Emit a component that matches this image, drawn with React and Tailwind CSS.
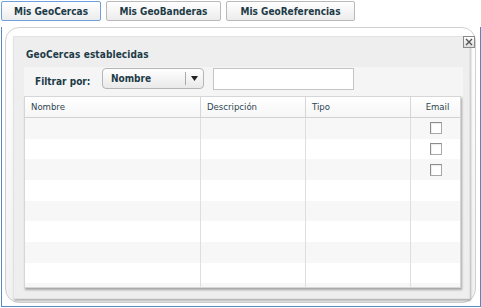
import React from 'react';

const tabs = [
  { label: 'Mis GeoCercas', w: 'w-[100px]', active: true },
  { label: 'Mis GeoBanderas', w: 'w-[115px]' },
  { label: 'Mis GeoReferencias', w: 'w-[129px]' },
];

const columns = [
  { label: 'Nombre', w: 'w-[176px]' },
  { label: 'Descripción', w: 'w-[105px]' },
  { label: 'Tipo', w: 'w-[105px]' },
  { label: 'Email', w: 'flex-1', center: true },
];

const rows = Array.from({ length: 9 }, (_, i) => ({ id: i, check: i < 3 }));

const Checkbox = () => (
  <span className="block w-[12px] h-[12px] bg-white border border-[#a8a8a8] border-t-[#8c8c8c] border-l-[#8c8c8c] shadow-[inset_1px_1px_1px_rgba(0,0,0,0.08)]" />
);

const App = () => {
  return (
    <div
      className="w-[481px] h-[308px] bg-white flex flex-col text-[#1d3b47]"
      style={{ fontFamily: '"DejaVu Sans Condensed", "DejaVu Sans", Verdana, sans-serif' }}
    >
      {/* Tabs */}
      <div className="flex gap-[5px] pl-[1px] pt-[1px] h-[27px]">
        {tabs.map((t) => (
          <button
            key={t.label}
            className={`${t.w} h-[20px] flex items-center justify-center text-[10px] font-bold rounded-[2px] bg-gradient-to-b from-white to-[#ececec] ${
              t.active ? 'border border-[#6f9fdc]' : 'border border-[#b9b9b9]'
            }`}
          >
            {t.label}
          </button>
        ))}
      </div>

      {/* Frame */}
      <div className="flex-1 ml-[1px] border-x border-b border-[#5b87c0] border-t-0 pl-[3px] pr-[4px] pb-[3px] mb-[1px] flex">
        <div className="relative flex-1 rounded-[14px] border border-[#d0d0d0] bg-gradient-to-b from-white to-[#f1f1f1] pl-[7px] pr-[5px] pt-[8px] pb-[3px] flex">
          {/* close */}
          <div className="absolute right-[0px] top-[8px] w-[12px] h-[12px] border border-[#8a8a8a] bg-gradient-to-b from-white to-[#dcdcdc] flex items-center justify-center">
            <svg width="8" height="8" viewBox="0 0 8 8">
              <path d="M1 1 L7 7 M7 1 L1 7" stroke="#555" strokeWidth="1.4" />
            </svg>
          </div>

          {/* Inner panel */}
          <div className="flex-1 flex flex-col bg-[#eeeeee] border border-[#e2e2e2] shadow-[1px_2px_2px_rgba(0,0,0,0.25)] pl-[10px] pr-[6px] pt-[13px]">
            <div className="text-[10px] font-bold pl-[2px] h-[17px] leading-[10px] tracking-[0.1px]">
              GeoCercas establecidas
            </div>

            {/* Filter bar */}
            <div className="h-[29px] bg-[#f5f5f5] flex items-start pt-[1px] pr-[2px]">
              <span className="text-[10px] font-bold w-[78px] pl-[11px] pt-[6px]">Filtrar por:</span>
              <div className="w-[102px] h-[21px] rounded-[4px] border border-[#b5b5b5] bg-gradient-to-b from-white to-[#e9e9e9] flex items-center">
                <span className="flex-1 text-[10px] font-bold pl-[8px]">Nombre</span>
                <span className="w-px h-[13px] bg-[#a9a9a9]" />
                <span className="w-[17px] flex justify-center">
                  <svg width="7" height="5" viewBox="0 0 7 5">
                    <path d="M0 0 H7 L3.5 5 Z" fill="#222" />
                  </svg>
                </span>
              </div>
              <input
                className="ml-[9px] w-[141px] h-[22px] bg-white border border-[#c4c4c4] outline-none"
                readOnly
              />
            </div>

            {/* Table */}
            <div className="mr-[2px] bg-white shadow-[1px_2px_2px_rgba(0,0,0,0.3)] border border-[#d6d6d6] h-[192px] overflow-hidden flex flex-col">
              <div className="flex h-[21px] shrink-0 bg-gradient-to-b from-white to-[#f6f6f6] border-b border-[#d2d2d2] text-[9.5px] text-[#2c4652]">
                {columns.map((c, i) => (
                  <div
                    key={c.label}
                    className={`${c.w} flex items-center ${c.center ? 'justify-center pl-[4px]' : 'pl-[6px]'} ${
                      i < columns.length - 1 ? 'border-r border-[#d6d6d6]' : ''
                    }`}
                  >
                    {c.label}
                  </div>
                ))}
              </div>
              {rows.map((r, idx) => (
                <div
                  key={r.id}
                  className={`flex h-[20.67px] shrink-0 ${idx % 2 === 0 ? 'bg-[#f7f7f7]' : 'bg-white'}`}
                >
                  <div className="w-[176px] border-r border-[#dedede]" />
                  <div className="w-[105px] border-r border-[#dedede]" />
                  <div className="w-[105px] border-r border-[#dedede]" />
                  <div className="flex-1 flex items-center justify-center">{r.check && <Checkbox />}</div>
                </div>
              ))}
            </div>
          </div>
        </div>
      </div>
    </div>
  );
};

export default App;
